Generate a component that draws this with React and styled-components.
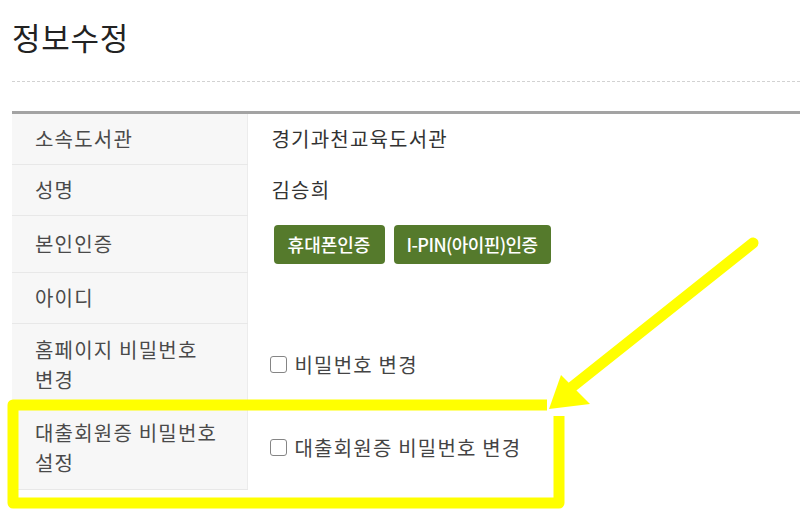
import React from 'react';
import styled, { createGlobalStyle } from 'styled-components';

const GlobalStyle = createGlobalStyle`
    html, body {
        margin: 0;
        padding: 0;
        background: #fff;
    }
    body {
        font-family: "Noto Sans CJK KR", "Noto Sans", sans-serif;
        color: #333;
        overflow: hidden;
    }
`;

const Page = styled.div`
    position: relative;
    width: 800px;
    height: 517px;
    padding: 16px 0 0 12px;
    box-sizing: border-box;
    overflow: hidden;
`;

const Title = styled.h1`
    margin: 0;
    font-size: 31px;
    line-height: 41px;
    font-weight: 400;
    color: #222;
    letter-spacing: 0.7px;
`;

const Divider = styled.hr`
    margin: 24px 0 0;
    border: 0;
    border-top: 1px dashed #d2d2d2;
    height: 0;
`;

const InfoTable = styled.table`
    width: 100%;
    margin-top: 29px;
    border-collapse: collapse;
    table-layout: fixed;
    border-top: 3px solid #a3a3a3;
`;

const LabelCell = styled.th`
    width: 235px;
    padding: ${props => props.$pad || '10px 0 10px'};
    padding-left: 23px;
    text-align: left;
    vertical-align: middle;
    background: #f7f7f7;
    border-right: 1px solid #ececec;
    border-bottom: 1px solid #e8e8e8;
    font-size: 20px;
    line-height: 30px;
    font-weight: 400;
    letter-spacing: 1.2px;
    color: #4a4a4a;
    box-sizing: border-box;
    white-space: nowrap;
`;

const ValueCell = styled.td`
    padding: ${props => props.$pad || '10px 0 10px'};
    padding-left: 24px;
    vertical-align: middle;
    font-size: 20px;
    line-height: 30px;
    letter-spacing: 1.2px;
    color: #333;
`;

const ButtonRow = styled.div`
    display: flex;
    gap: 9px;
    margin-left: 2px;
`;

const CertButton = styled.button`
    width: ${props => props.$w};
    height: 39px;
    padding: 0;
    border: 0;
    border-radius: 4px;
    background: #557a2c;
    color: #fff;
    font-family: "Noto Sans CJK KR", sans-serif;
    font-size: 18px;
    font-weight: 500;
    letter-spacing: ${props => props.$ls || '0'};
    white-space: nowrap;
    cursor: pointer;
`;

const CheckLabel = styled.label`
    display: inline-flex;
    align-items: center;
    gap: 8px;
    color: #444;
    cursor: pointer;
`;

const Check = styled.input`
    appearance: none;
    margin: 0 0 0 -2px;
    width: 17px;
    height: 17px;
    border: 1.5px solid #858585;
    border-radius: 3px;
    background: #fff;
    box-sizing: border-box;
`;

const Annotation = styled.svg`
    position: absolute;
    left: 0;
    top: 0;
    pointer-events: none;
`;

const rows = [
    { label: '소속도서관', value: '경기과천교육도서관' },
    { label: '성명', value: '김승희' },
];

export default function App() {
    return (
        <>
            <GlobalStyle />
            <Page>
                <Title>정보수정</Title>
                <Divider />
                <InfoTable>
                    <tbody>
                        {rows.map(row => (
                            <tr key={row.label}>
                                <LabelCell>{row.label}</LabelCell>
                                <ValueCell>{row.value}</ValueCell>
                            </tr>
                        ))}
                        <tr>
                            <LabelCell $pad="13px 0 13px">본인인증</LabelCell>
                            <ValueCell $pad="9px 0 9px">
                                <ButtonRow>
                                    <CertButton $w="111px">휴대폰인증</CertButton>
                                    <CertButton $w="157px" $ls="-0.6px">I-PIN(아이핀)인증</CertButton>
                                </ButtonRow>
                            </ValueCell>
                        </tr>
                        <tr>
                            <LabelCell>아이디</LabelCell>
                            <ValueCell />
                        </tr>
                        <tr>
                            <LabelCell $pad="11px 0 11px">홈페이지 비밀번호<br />변경</LabelCell>
                            <ValueCell>
                                <CheckLabel><Check type="checkbox" />비밀번호 변경</CheckLabel>
                            </ValueCell>
                        </tr>
                        <tr>
                            <LabelCell $pad="11px 0 11px">대출회원증 비밀번호<br />설정</LabelCell>
                            <ValueCell>
                                <CheckLabel><Check type="checkbox" />대출회원증 비밀번호 변경</CheckLabel>
                            </ValueCell>
                        </tr>
                    </tbody>
                </InfoTable>
                <Annotation width="800" height="517" viewBox="0 0 800 517">
                    <g fill="none" stroke="#ffff00" strokeWidth="11" strokeLinejoin="round">
                        <path d="M547 405 L13 405 L13 503 L559 503 L559 416" />
                        <path d="M753 243 L572 387" strokeLinecap="round" />
                    </g>
                    <polygon points="549,409 561,375 590,404" fill="#ffff00" />
                </Annotation>
            </Page>
        </>
    );
}
